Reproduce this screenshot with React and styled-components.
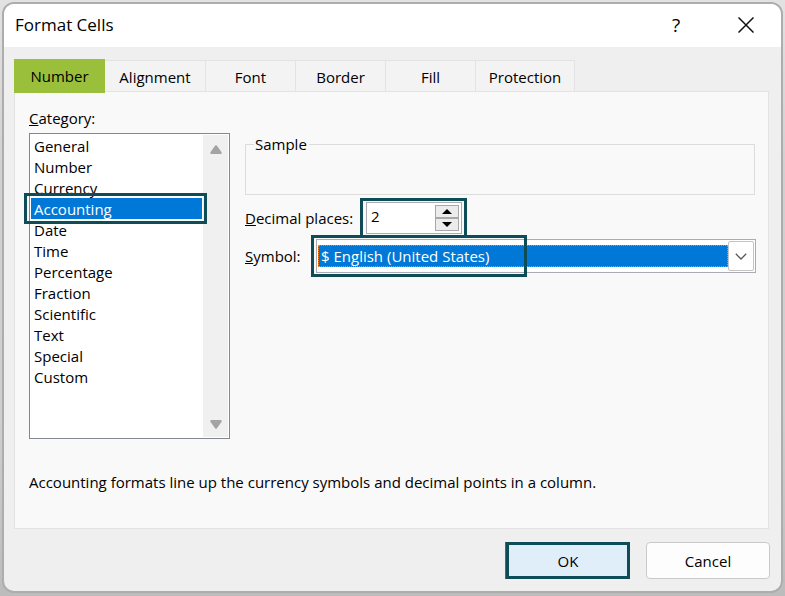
import React, { useState } from 'react'
import styled, { createGlobalStyle } from 'styled-components'

const tabs = [
  { name: 'Number', width: 91 },
  { name: 'Alignment', width: 101 },
  { name: 'Font', width: 90 },
  { name: 'Border', width: 90 },
  { name: 'Fill', width: 90 },
  { name: 'Protection', width: 99 },
]

const categories = [
  'General',
  'Number',
  'Currency',
  'Accounting',
  'Date',
  'Time',
  'Percentage',
  'Fraction',
  'Scientific',
  'Text',
  'Special',
  'Custom',
]

const App = () => {
  const [tab, setTab] = useState('Number')
  const [category, setCategory] = useState('Accounting')
  const [places, setPlaces] = useState(2)

  return (
    <Desktop>
      <GlobalStyle />
      <Dialog role='dialog' aria-labelledby='title'>
        <TitleBar>
          <h1 id='title'>Format Cells</h1>
          <TitleButton aria-label='Help'>?</TitleButton>
          <TitleButton aria-label='Close'>
            <svg width='16' height='16' viewBox='0 0 16 16'>
              <path
                d='M0.5 0.5 15.5 15.5M15.5 0.5 0.5 15.5'
                stroke='#111'
                strokeWidth='1.5'
              />
            </svg>
          </TitleButton>
        </TitleBar>

        <Body>
          <Tabs role='tablist'>
            {tabs.map(({ name, width }) => (
              <Tab
                key={name}
                role='tab'
                aria-selected={tab === name}
                $active={tab === name}
                $width={width}
                onClick={() => setTab(name)}
              >
                {name}
              </Tab>
            ))}
          </Tabs>

          <Panel role='tabpanel'>
            <Columns>
              <div>
                <CategoryLabel id='category'>
                  <u>C</u>ategory:
                </CategoryLabel>
                <ListBox>
                  <List role='listbox' aria-labelledby='category'>
                    {categories.map((name) => (
                      <Option
                        key={name}
                        role='option'
                        aria-selected={category === name}
                        $selected={category === name}
                        onClick={() => setCategory(name)}
                      >
                        {name}
                      </Option>
                    ))}
                  </List>
                  <ScrollBar aria-hidden='true'>
                    <svg width='12' height='9' viewBox='0 0 12 9'>
                      <path
                        d='M5.2 0.6Q6 -0.2 6.8 0.6L11.6 7.2Q12 9 10.6 9H1.4Q0 9 0.4 7.2Z'
                        fill='#a3a3a3'
                      />
                    </svg>
                    <svg width='12' height='9' viewBox='0 0 12 9'>
                      <path
                        d='M5.2 8.4Q6 9.2 6.8 8.4L11.6 1.8Q12 0 10.6 0H1.4Q0 0 0.4 1.8Z'
                        fill='#a3a3a3'
                      />
                    </svg>
                  </ScrollBar>
                </ListBox>
              </div>

              <Settings>
                <Sample>
                  <legend>Sample</legend>
                </Sample>
                <Field $label={121}>
                  <label htmlFor='places'>
                    <u>D</u>ecimal places:
                  </label>
                  <Spinner>
                    <input
                      id='places'
                      type='text'
                      value={places}
                      onChange={(e) => setPlaces(Number(e.target.value) || 0)}
                    />
                    <Steps>
                      <button
                        aria-label='Increase'
                        onClick={() => setPlaces(places + 1)}
                      >
                        <svg width='10' height='5' viewBox='0 0 10 5'>
                          <path d='M5 0 10 5H0Z' />
                        </svg>
                      </button>
                      <button
                        aria-label='Decrease'
                        onClick={() => setPlaces(Math.max(0, places - 1))}
                      >
                        <svg width='10' height='5' viewBox='0 0 10 5'>
                          <path d='M5 5 10 0H0Z' />
                        </svg>
                      </button>
                    </Steps>
                  </Spinner>
                </Field>
                <Field $label={71}>
                  <label htmlFor='symbol'>
                    <u>S</u>ymbol:
                  </label>
                  <Combo>
                    <select id='symbol'>
                      <option>$ English (United States)</option>
                    </select>
                    <Arrow aria-hidden='true'>
                      <svg width='12' height='7' viewBox='0 0 12 7'>
                        <path
                          d='M0.8 0.8 6 6 11.2 0.8'
                          fill='none'
                          stroke='#555'
                          strokeWidth='1.3'
                        />
                      </svg>
                    </Arrow>
                  </Combo>
                </Field>
              </Settings>
            </Columns>

            <Description>
              Accounting formats line up the currency symbols and decimal points
              in a column.
            </Description>
          </Panel>

          <Footer>
            <Button $primary>OK</Button>
            <Button>Cancel</Button>
          </Footer>
        </Body>
      </Dialog>
    </Desktop>
  )
}

export default App

const teal = '#0e4d57'
const blue = '#0078d7'

const GlobalStyle = createGlobalStyle`
  *,
  *::after {
    box-sizing: border-box;
  }

  body {
    margin: 0;
    color: #000;
    font-family: 'Open Sans', sans-serif;
    font-size: 15px;
    line-height: 20px;
  }

  button,
  input,
  select {
    color: inherit;
    font: inherit;
  }
`

const Desktop = styled.main`
  display: flex;
  min-height: 100vh;
  padding: 2px 2px 3px;
  background: linear-gradient(#e2e2e2, #d0d0d0 30%, #cfcfcf 70%, #bcbcbc);
`

const Dialog = styled.section`
  display: flex;
  flex-direction: column;
  flex: 1;
  border: 2px solid #adadad;
  border-radius: 12px;
  background: #efefef;
  overflow: hidden;
`

const TitleBar = styled.header`
  display: flex;
  align-items: center;
  height: 43px;
  padding: 0 10px 2px 11px;
  background: #fff;

  h1 {
    flex: 1;
    margin: 0;
    font-size: 17px;
    font-weight: 400;
  }
`

const TitleButton = styled.button`
  display: flex;
  align-items: center;
  justify-content: center;
  width: 50px;
  height: 32px;
  margin-left: 20px;
  padding: 0;
  border: 0;
  background: none;
  font-size: 19px;
`

const Body = styled.div`
  display: flex;
  flex-direction: column;
  flex: 1;
  padding: 12px 11px 12px 10px;
`

const Tabs = styled.div`
  display: flex;
  align-items: flex-end;
  height: 32px;
`

const Tab = styled.button`
  position: relative;
  width: ${({ $width }) => $width}px;
  height: ${({ $active }) => ($active ? 34 : 31)}px;
  margin-bottom: ${({ $active }) => ($active ? -2 : 0)}px;
  padding: ${({ $active }) => ($active ? 0 : '2px 0 0')};
  border: solid #e3e3e3;
  border-width: ${({ $active }) => ($active ? '0' : '1px 1px 0 0')};
  background: ${({ $active }) => ($active ? '#9abf3b' : '#f3f3f3')};
`

const Panel = styled.div`
  flex: 1;
  margin-right: 1px;
  padding: 16px 12px 16px 14px;
  border: 1px solid #e3e3e3;
  background: #f9f9f9;
`

const Columns = styled.div`
  display: grid;
  grid-template-columns: 201px 1fr;
  gap: 15px;
`

const CategoryLabel = styled.div`
  margin-bottom: 5px;
`

const ListBox = styled.div`
  display: flex;
  height: 306px;
  padding: 1px;
  border: 1px solid #828790;
  background: #fff;
`

const List = styled.ul`
  flex: 1;
  margin: 0;
  padding: 0;
  list-style: none;
`

const Option = styled.li`
  position: relative;
  height: 21px;
  margin-right: 1px;
  padding-left: 3px;
  line-height: 23px;
  color: ${({ $selected }) => ($selected ? '#fff' : '#000')};
  background: ${({ $selected }) => ($selected ? blue : 'none')};

  &::after {
    content: '';
    display: ${({ $selected }) => ($selected ? 'block' : 'none')};
    position: absolute;
    inset: -5px -5px -5px -7px;
    border: 3px solid ${teal};
  }
`

const ScrollBar = styled.div`
  display: flex;
  flex-direction: column;
  align-items: center;
  justify-content: space-between;
  width: 25px;
  padding: 10px 0 8px;
  background: #f0f0f0;
`

const Settings = styled.div`
  padding-top: 26px;
`

const Sample = styled.fieldset`
  height: 61px;
  margin: 0 1px 7px 0;
  padding: 0 8px;
  border: 1px solid #dcdcdc;

  legend {
    padding: 0 2px 0 1px;
  }
`

const Field = styled.div`
  display: grid;
  grid-template-columns: ${({ $label }) => $label}px 1fr;
  align-items: center;
  margin-bottom: 5px;
`

const Spinner = styled.div`
  position: relative;
  display: flex;
  width: 96px;
  height: 32px;
  padding: 2px;
  border: 1px solid #ababb3;
  background: #fff;

  &::after {
    content: '';
    position: absolute;
    inset: -5px -6px -5px -7px;
    border: 3px solid ${teal};
    pointer-events: none;
  }

  input {
    flex: 1;
    min-width: 0;
    padding: 0 2px 4px;
    border: 0;
    outline: 0;
    background: none;
  }
`

const Steps = styled.div`
  display: flex;
  flex-direction: column;
  width: 24px;

  button {
    display: flex;
    flex: 1;
    align-items: center;
    justify-content: center;
    padding: 0;
    border: 1px solid #a8a8a8;
    background: #ececec;
  }
`

const Combo = styled.div`
  position: relative;
  display: flex;
  align-items: center;
  height: 34px;
  padding: 1px;
  border: 1px solid #ababb3;
  background: #fff;

  &::after {
    content: '';
    position: absolute;
    top: -5px;
    bottom: -5px;
    left: -6px;
    width: 216px;
    border: 3px solid ${teal};
    pointer-events: none;
  }

  select {
    flex: 1;
    height: 22px;
    padding: 0 2px;
    border: 1px dotted #ff8728;
    border-radius: 0;
    outline: 0;
    appearance: none;
    color: #fff;
    background: ${blue};
    line-height: 20px;
  }
`

const Arrow = styled.span`
  display: flex;
  align-items: center;
  justify-content: center;
  width: 26px;
  height: 30px;
  border: 1px solid #c4c4c4;
  border-radius: 2px;
  background: #fff;
`

const Description = styled.p`
  margin: 33px 0 0;
`

const Footer = styled.footer`
  display: flex;
  justify-content: flex-end;
  gap: 16px;
  margin-top: 13px;
`

const Button = styled.button`
  width: 124px;
  height: 37px;
  border: ${({ $primary }) =>
    $primary ? `3px solid ${teal}` : '1px solid #c6cacd'};
  border-radius: ${({ $primary }) => ($primary ? 0 : 4)}px;
  background: ${({ $primary }) => ($primary ? '#e0eef9' : '#fdfdfd')};
  box-shadow: ${({ $primary }) => ($primary ? `-1px 0 ${blue}` : 'none')};
`
